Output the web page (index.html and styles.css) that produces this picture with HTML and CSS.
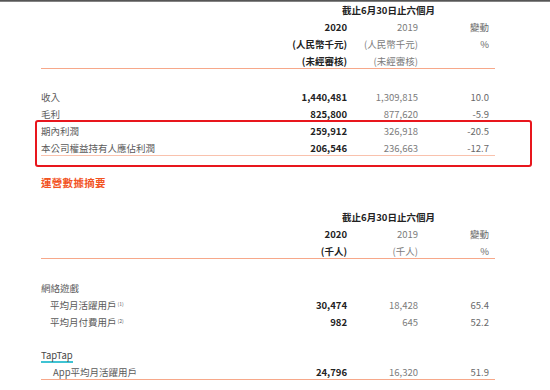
FILE: index.html
```html
<!DOCTYPE html>
<html lang="zh-Hant">
<head>
<meta charset="utf-8">
<title>財務摘要</title>
<link rel="stylesheet" href="styles.css">
</head>
<body>
<div class="topbar"></div>
<div class="page">
  <div class="group head first">
    <div class="row"><span class="span3 bold">截止6月30日止六個月</span></div>
    <div class="row"><span></span><span class="c1 bold">2020</span><span class="c2">2019</span><span class="c3">變動</span></div>
    <div class="row"><span></span><span class="c1 bold">(人民幣千元)</span><span class="c2">(人民幣千元)</span><span class="c3">%</span></div>
    <div class="row ruled"><span></span><span class="c1 bold">(未經審核)</span><span class="c2">(未經審核)</span><span class="c3"></span></div>
  </div>

  <div class="group data">
    <div class="row"><span class="lbl">收入</span><span class="c1 bold">1,440,481</span><span class="c2">1,309,815</span><span class="c3">10.0</span></div>
    <div class="row"><span class="lbl">毛利</span><span class="c1 bold">825,800</span><span class="c2">877,620</span><span class="c3">-5.9</span></div>
    <div class="row"><span class="lbl">期內利潤</span><span class="c1 bold">259,912</span><span class="c2">326,918</span><span class="c3">-20.5</span></div>
    <div class="row ruled light"><span class="lbl">本公司權益持有人應佔利潤</span><span class="c1 bold">206,546</span><span class="c2">236,663</span><span class="c3">-12.7</span></div>
  </div>

  <h2 class="section-title">運營數據摘要</h2>

  <div class="group head second">
    <div class="row"><span class="span3 bold">截止6月30日止六個月</span></div>
    <div class="row"><span></span><span class="c1 bold">2020</span><span class="c2">2019</span><span class="c3">變動</span></div>
    <div class="row ruled"><span></span><span class="c1 bold">(千人)</span><span class="c2">(千人)</span><span class="c3">%</span></div>
  </div>

  <div class="group data games">
    <div class="row"><span class="lbl">網絡遊戲</span></div>
    <div class="row"><span class="lbl sub">平均月活躍用戶<sup>(1)</sup></span><span class="c1 bold">30,474</span><span class="c2">18,428</span><span class="c3">65.4</span></div>
    <div class="row"><span class="lbl sub">平均月付費用戶<sup>(2)</sup></span><span class="c1 bold">982</span><span class="c2">645</span><span class="c3">52.2</span></div>
  </div>

  <div class="group data taptap">
    <div class="row"><span class="lbl"><span class="tap">TapTap</span></span></div>
    <div class="row ruled"><span class="lbl sub2">App平均月活躍用戶</span><span class="c1 bold">24,796</span><span class="c2">16,320</span><span class="c3">51.9</span></div>
  </div>

  <div class="highlight"></div>
</div>
</body>
</html>
```
FILE: styles.css
```css
* { box-sizing: border-box; }
html, body { margin: 0; padding: 0; background: #fff; }
body {
  font-family: "Noto Sans CJK TC", "Noto Sans", sans-serif;
  font-size: 9.5px;
  color: #5a5a5a;
  width: 550px;
  height: 390px;
  overflow: hidden;
}
.topbar {
  height: 2px;
  background: linear-gradient(#3f3f3f, #9a9a9a);
}
.page {
  position: relative;
  padding: 1px 55px 0 41px;
}
.group {
  display: flex;
  flex-direction: column;
  gap: 3px;
}
.row {
  display: grid;
  grid-template-columns: 1fr 71px 71px 71px 6px;
  height: 14px;
  line-height: 14px;
  white-space: nowrap;
}
.row.ruled {
  height: 15px;
  border-bottom: 1px solid #f7a88a;
}
.row.ruled.light { border-bottom-color: #f9c2ad; }
.span3 {
  grid-column: 2 / 5;
  text-align: center;
  padding-left: 12px;
}
.bold { font-weight: 700; color: #222; }
.c1 { grid-column: 2; text-align: right; }
.c2 { grid-column: 3; text-align: right; color: #7c7c7c; }
.c3 { grid-column: 4; text-align: right; color: #6a6a6a; }
.lbl { grid-column: 1; }
.sub { padding-left: 9px; }
.sub2 { padding-left: 12px; }
sup {
  font-size: 5px;
  line-height: 0;
  vertical-align: 3px;
  margin-left: 1px;
}
.data.first, .group.data { margin-top: 21px; }
.section-title {
  margin: 20px 0 0;
  font-size: 10.5px;
  line-height: 14px;
  font-weight: 700;
  color: #f2531f;
  letter-spacing: 0.3px;
}
.group.head.second { margin-top: 20px; }
.group.data.games { margin-top: 22px; }
.group.data.taptap { margin-top: 19px; }
.tap {
  display: inline-block;
  line-height: 12px;
  border-bottom: 2px solid #3fc3d3;
  color: #4a4a4a;
}
.highlight {
  position: absolute;
  left: 35px;
  top: 118px;
  width: 497px;
  height: 47px;
  border: 2.5px solid #e8161d;
  border-radius: 3px;
}
```
